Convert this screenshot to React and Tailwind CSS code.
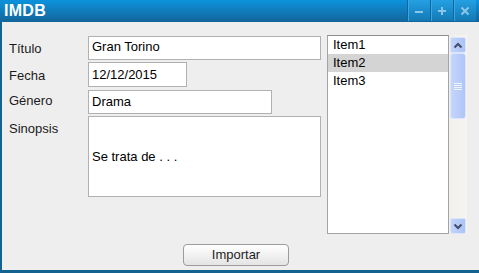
import React from 'react';

const font = { fontFamily: '"Liberation Sans", Arial, sans-serif' };

const TitleButton = ({ children }) => (
    <div className="w-[23px] h-[21px] flex items-center justify-center border-l border-[#0c679e] shadow-[inset_1px_0_0_#3aa6e2] bg-gradient-to-b from-[#24a0e3] to-[#1479b5]">
        {children}
    </div>
);

const Field = ({ label, labelTop, width, height = 'h-[24px]', value }) => (
    <div className="flex">
        <div className="w-[79px] text-[13px] leading-[16px] text-[#1a1a1a]" style={{ paddingTop: labelTop }}>{label}</div>
        <div className={`${width} ${height} bg-white border border-[#b1b1b1] pl-[3px] flex items-center text-[13px] leading-[16px] text-black`}>
            {value}
        </div>
    </div>
);

const Chevron = ({ up }) => (
    <svg width="10" height="7" viewBox="0 0 10 7">
        <path d={up ? 'M1.5 5.5 L5 2 L8.5 5.5' : 'M1.5 1.5 L5 5 L8.5 1.5'} fill="none" stroke="#3f4d6b" strokeWidth="2" />
    </svg>
);

const ScrollButton = ({ up }) => (
    <div className="h-[16px] mx-px rounded-[2px] border border-[#dbe5fb] bg-gradient-to-r from-[#c2d4fb] to-[#abc3f5] flex items-center justify-center">
        <Chevron up={up} />
    </div>
);

export default function App() {
    const items = ['Item1', 'Item2', 'Item3'];
    return (
        <div className="w-[479px] h-[273px] flex flex-col bg-[#eeeeee]" style={font}>
            {/* Title bar */}
            <div className="h-[22px] flex items-start justify-between bg-gradient-to-b from-[#0b93dd] to-[#12659a]">
                <div className="pl-[4px] h-[22px] flex items-center text-[16px] tracking-[0.3px] font-bold text-white">IMDB</div>
                <div className="flex mr-[3px]">
                    <TitleButton>
                        <svg width="10" height="10" viewBox="0 0 10 10"><rect x="1" y="5" width="8" height="2" fill="#8cc6e6" /></svg>
                    </TitleButton>
                    <TitleButton>
                        <svg width="10" height="10" viewBox="0 0 10 10"><rect x="1" y="4" width="8" height="2" fill="#8cc6e6" /><rect x="4" y="1" width="2" height="8" fill="#8cc6e6" /></svg>
                    </TitleButton>
                    <TitleButton>
                        <svg width="10" height="10" viewBox="0 0 10 10"><path d="M1.5 1.5 L8.5 8.5 M8.5 1.5 L1.5 8.5" stroke="#8cc6e6" strokeWidth="2" /></svg>
                    </TitleButton>
                </div>
            </div>

            {/* Body */}
            <div className="flex-1 border-l-2 border-b-[3px] border-[#13628f] pl-[7px] pt-[13px]">
                <div className="flex">
                    {/* Form */}
                    <div className="w-[312px] mt-px flex flex-col">
                        <Field label="Título" labelTop={5} width="w-[233px]" value={<span className="pb-[2px]">Gran Torino</span>} />
                        <div className="mt-[2px]">
                            <Field label="Fecha" labelTop={6} width="w-[99px]" height="h-[25px]" value="12/12/2015" />
                        </div>
                        <div className="mt-[3px]">
                            <Field label="Género" labelTop={3} width="w-[184px]" value="Drama" />
                        </div>
                        <div className="mt-[2px]">
                            <Field label="Sinopsis" labelTop={5} width="w-[233px]" height="h-[81px]" value="Se trata de . . ." />
                        </div>
                    </div>

                    {/* List */}
                    <div className="ml-[6px] h-[199px] flex">
                        <div className="w-[122px] h-full bg-white border border-[#a4a4a4] border-t-[#8c8c8c] text-[13px] text-black">
                            {items.map((item) => (
                                <div key={item} className={`h-[18px] pl-[5px] flex items-center ${item === 'Item2' ? 'bg-[#d4d4d4]' : ''}`}>
                                    {item}
                                </div>
                            ))}
                        </div>
                        <div className="w-[18px] h-full bg-gradient-to-r from-[#f1f0ec] to-[#f6f5f2] flex flex-col pt-[2px]">
                            <ScrollButton up />
                            <div className="h-[66px] mx-px rounded-[3px] border border-[#dbe5fb] bg-gradient-to-r from-[#c6d6fb] to-[#aec5f6] flex flex-col items-center justify-center gap-[1px]">
                                <div className="w-[8px] h-px bg-[#eef3fe]" />
                                <div className="w-[8px] h-px bg-[#eef3fe]" />
                                <div className="w-[8px] h-px bg-[#eef3fe]" />
                                <div className="w-[8px] h-px bg-[#eef3fe]" />
                            </div>
                            <div className="flex-1" />
                            <ScrollButton />
                        </div>
                    </div>
                </div>

                {/* Import button */}
                <div className="mt-[10px] ml-[174px]">
                    <button className="w-[106px] h-[22px] rounded-[4px] border border-[#9b9b9b] bg-gradient-to-b from-white to-[#e4e4e4] text-[13px] text-[#1e1e1e] flex items-center justify-center">
                        Importar
                    </button>
                </div>
            </div>
        </div>
    );
}
